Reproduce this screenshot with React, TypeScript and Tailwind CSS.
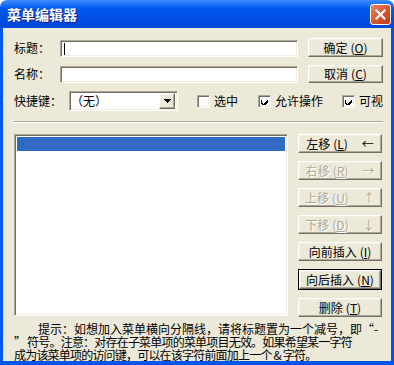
import React from 'react';

const font = { fontFamily: '"Noto Sans CJK SC", "Liberation Sans", sans-serif' };

const sunken =
  'bg-white border border-t-[#ACA899] border-l-[#ACA899] border-b-white border-r-white shadow-[inset_1px_1px_0_#716F64,inset_-1px_-1px_0_#F1EFE2]';
const raised =
  'bg-[#ECE9D8] border border-t-white border-l-white border-b-[#716F64] border-r-[#716F64] shadow-[inset_-1px_-1px_0_#ACA899,inset_1px_1px_0_#F1EFE2]';

function Key({ k }: { k: string }) {
  return (
    <span className="ml-[3px]">
      (<span className="underline underline-offset-1">{k}</span>)
    </span>
  );
}

function Btn({
  label,
  k,
  arrow,
  disabled,
  focused,
  className = '',
}: {
  label: string;
  k: string;
  arrow?: string;
  disabled?: boolean;
  focused?: boolean;
  className?: string;
}) {
  const inner = (
    <div
      className={`${raised} flex h-full w-full items-center justify-center whitespace-nowrap text-[12px] leading-none ${
        disabled ? 'text-[#ACA899] [text-shadow:1px_1px_0_#fff]' : 'text-black'
      }`}
    >
      <span>{label}</span>
      <Key k={k} />
      {arrow && <span className="ml-[14px] text-[12px]">{arrow}</span>}
    </div>
  );
  if (focused) {
    return <div className={`border border-black ${className}`}>{inner}</div>;
  }
  return <div className={className}>{inner}</div>;
}

function Check({ checked, label, className = '' }: { checked?: boolean; label: string; className?: string }) {
  return (
    <div className={`flex shrink-0 items-center ${className}`}>
      <div className={`${sunken} flex h-[13px] w-[13px] shrink-0 items-center justify-center`}>
        {checked && (
          <svg width="7" height="7" viewBox="0 0 7 7" shapeRendering="crispEdges">
            <path d="M0 2h1v3h1v1h1v-1h1v-1h1v-1h1v-1h1v3h-1v1h-1v1h-1v1h-2v-1h-1v-1h-1z" fill="#000" />
          </svg>
        )}
      </div>
      <span className="ml-[4px] whitespace-nowrap text-[12px] leading-none">{label}</span>
    </div>
  );
}

export default function App() {
  return (
    <div className="flex h-[365px] w-[394px] flex-col select-none text-black" style={font}>
      {/* title bar */}
      <div className="flex h-[29px] items-center justify-between rounded-t-[7px] bg-gradient-to-b from-[#3C8DFF] via-[#0058EE] via-30% to-[#0046DA] pl-[7px] pr-[3px]">
        <span className="text-[14px] font-bold leading-none text-white [text-shadow:1px_1px_0_#0A1E8C]">
          菜单编辑器
        </span>
        <div className="flex h-[21px] w-[21px] items-center justify-center rounded-[3px] border border-white bg-gradient-to-br from-[#E8856A] via-[#D9572F] to-[#C03A1A]">
          <svg width="11" height="11" viewBox="0 0 11 11">
            <path d="M1.5 1.5l8 8M9.5 1.5l-8 8" stroke="#fff" strokeWidth="2.2" strokeLinecap="square" />
          </svg>
        </div>
      </div>

      {/* client */}
      <div className="flex flex-1 flex-col border-x-[3px] border-b-[4px] border-[#0055EA] bg-[#ECE9D8] pl-[11px]">
        <div className="mt-[10px] flex items-center">
          <span className="w-[46px] text-[12px] leading-none">标题：</span>
          <div className={`${sunken} mt-[2px] flex h-[17px] w-[238px] items-center pl-[3px]`}>
            <div className="h-[12px] w-px bg-black" />
          </div>
          <Btn label="确定" k="O" className="ml-[10px] h-[19px] w-[75px]" />
        </div>
        <div className="mt-[7px] flex items-center">
          <span className="w-[46px] text-[12px] leading-none">名称：</span>
          <div className={`${sunken} mt-[2px] h-[17px] w-[238px]`} />
          <Btn label="取消" k="C" className="ml-[10px] h-[18px] w-[75px]" />
        </div>
        <div className="mt-[8px] flex items-center">
          <span className="w-[55px] shrink-0 whitespace-nowrap text-[12px] leading-none">快捷键：</span>
          <div className={`${sunken} flex h-[20px] w-[109px] shrink-0 items-center justify-between pl-[1px] pr-[2px]`}>
            <span className="text-[12px] leading-none">（无）</span>
            <div className={`${raised} flex h-[16px] w-[16px] items-center justify-center`}>
              <svg width="7" height="4" viewBox="0 0 7 4" shapeRendering="crispEdges">
                <path d="M0 0h7v1h-1v1h-1v1h-1v1h-1v-1h-1v-1h-1v-1h-1z" fill="#000" />
              </svg>
            </div>
          </div>
          <Check label="选中" className="ml-[19px]" />
          <Check checked label="允许操作" className="ml-[20px]" />
          <Check checked label="可视" className="ml-[19px]" />
        </div>

        {/* separator */}
        <div className="mt-[10px] h-[2px] w-[369px] border-t border-t-[#ACA899] border-b border-b-white" />

        <div className="mt-[11px] flex">
          <div className={`${sunken} h-[182px] w-[274px] p-[2px]`}>
            <div className="h-[14px] w-full bg-[#316AC5]" />
          </div>
          <div className="ml-[10px] flex w-[84px] flex-col gap-[8px]">
            <Btn label="左移" k="L" arrow="←" className="h-[19px] w-[84px]" />
            <Btn label="右移" k="R" arrow="→" disabled className="h-[19px] w-[84px]" />
            <Btn label="上移" k="U" arrow="↑" disabled className="h-[19px] w-[84px]" />
            <Btn label="下移" k="D" arrow="↓" disabled className="h-[19px] w-[84px]" />
            <Btn label="向前插入" k="I" className="h-[19px] w-[84px]" />
            <Btn label="向后插入" k="N" focused className="h-[21px] w-[84px]" />
            <Btn label="删除" k="T" className="h-[19px] w-[84px]" />
          </div>
        </div>

        <div className="mt-[5px] whitespace-pre text-[12px] leading-[13px]">
          <div className="pl-[24px]">提示：如想加入菜单横向分隔线，请将标题置为一个减号，即“-</div>
          <div className="tracking-[-0.8px]">” 符号。注意：对存在子菜单项的菜单项目无效。如果希望某一字符</div>
          <div className="tracking-[-0.8px]">成为该菜单项的访问键，可以在该字符前面加上一个 &amp; 字符。</div>
        </div>
      </div>
    </div>
  );
}
